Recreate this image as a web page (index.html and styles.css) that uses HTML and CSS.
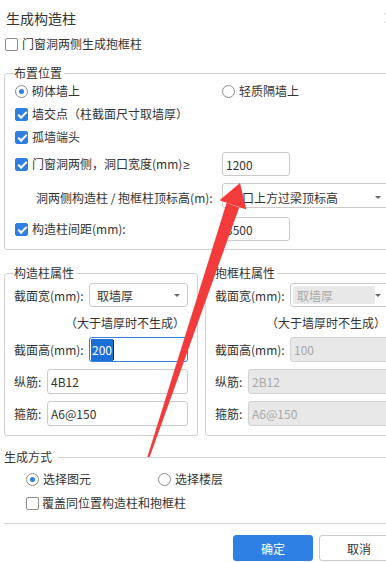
FILE: index.html
```html
<!DOCTYPE html>
<html lang="zh-CN">
<head>
    <meta charset="UTF-8">
    <meta name="viewport" content="width=device-width, initial-scale=1.0">
    <title>生成构造柱</title>
    <link rel="stylesheet" href="styles.css">
</head>
<body>
<div class="dialog">
    <div class="title">
        <span>生成构造柱</span>
        <svg class="close" width="10" height="10" viewBox="0 0 10 10"><path d="M0.5 0.5L9.5 9.5M9.5 0.5L0.5 9.5" stroke="#9a9a9a" stroke-width="1.2"/></svg>
    </div>

    <label class="check lone"><span class="box"></span>门窗洞两侧生成抱框柱</label>

    <fieldset class="group place">
        <legend>布置位置</legend>
        <div class="row">
            <label class="radio label-col"><span class="dot on"></span>砌体墙上</label>
            <label class="radio"><span class="dot"></span>轻质隔墙上</label>
        </div>
        <label class="check gap3"><span class="box on"></span>墙交点（柱截面尺寸取墙厚）</label>
        <label class="check gap3"><span class="box on"></span>孤墙端头</label>
        <div class="row field-row r1">
            <label class="check label-col"><span class="box on"></span><span>门窗洞两侧，洞口宽度(mm)<span class="ge">≥</span></span></label>
            <div class="input short">1200</div>
        </div>
        <div class="row field-row r2">
            <span class="label-col indent">洞两侧构造柱 / 抱框柱顶标高(m):</span>
            <div class="select grow"><span>洞口上方过梁顶标高</span><span class="caret"></span></div>
        </div>
        <div class="row field-row r3">
            <label class="check label-col"><span class="box on"></span>构造柱间距(mm):</label>
            <div class="input short">3500</div>
        </div>
    </fieldset>

    <div class="props">
        <fieldset class="group half">
            <legend>构造柱属性</legend>
            <div class="row prop-row first">
                <span class="lbl">截面宽(mm):</span>
                <div class="select grow"><span>取墙厚</span><span class="caret"></span></div>
            </div>
            <div class="note">（大于墙厚时不生成）</div>
            <div class="row prop-row">
                <span class="lbl">截面高(mm):</span>
                <div class="input grow focus"><span class="picked">200</span><span class="cursor"></span></div>
            </div>
            <div class="row prop-row">
                <span class="lbl short-lbl">纵筋:</span>
                <div class="input grow">4B12</div>
            </div>
            <div class="row prop-row">
                <span class="lbl short-lbl">箍筋:</span>
                <div class="input grow">A6@150</div>
            </div>
        </fieldset>

        <fieldset class="group half off">
            <legend>抱框柱属性</legend>
            <div class="row prop-row first">
                <span class="lbl">截面宽(mm):</span>
                <div class="select grow"><span class="inner">取墙厚</span><span class="caret"></span></div>
            </div>
            <div class="note">（大于墙厚时不生成）</div>
            <div class="row prop-row">
                <span class="lbl">截面高(mm):</span>
                <div class="input grow">100</div>
            </div>
            <div class="row prop-row">
                <span class="lbl short-lbl">纵筋:</span>
                <div class="input grow">2B12</div>
            </div>
            <div class="row prop-row">
                <span class="lbl short-lbl">箍筋:</span>
                <div class="input grow">A6@150</div>
            </div>
        </fieldset>
    </div>

    <div class="section">生成方式</div>
    <div class="row gen">
        <label class="radio gen-first"><span class="dot on"></span>选择图元</label>
        <label class="radio"><span class="dot"></span>选择楼层</label>
    </div>
    <label class="check cover"><span class="box"></span>覆盖同位置构造柱和抱框柱</label>

    <div class="divider"></div>

    <div class="buttons">
        <button class="btn primary">确定</button>
        <button class="btn">取消</button>
    </div>

    <!-- red annotation arrow drawn over the dialog -->
    <svg class="arrow" width="386" height="562" viewBox="0 0 386 562">
        <polygon points="147.4,448.8 149.6,449.2 239.2,199.4 226.6,194.8" fill="#f33b3b"/>
        <polygon points="240,175 219.5,192.3 246.3,201.6" fill="#f33b3b"/>
    </svg>
</div>
</body>
</html>
```

FILE: styles.css
```css
* {
    box-sizing: border-box;
}

body {
    margin: 0;
    background: #fff;
    overflow: hidden;
    font-family: "Noto Sans CJK SC", "Noto Sans", sans-serif;
    font-size: 12px;
    color: #333;
}

.dialog {
    position: relative;
    width: 403px;
    padding: 0 4px;
}

.title {
    display: flex;
    align-items: center;
    height: 20px;
    margin-top: 8px;
    padding-left: 2px;
    font-size: 14px;
    line-height: 20px;
}

.close {
    margin-left: auto;
    margin-right: 4px;
}

.row {
    display: flex;
    align-items: center;
}

.check,
.radio {
    display: flex;
    align-items: center;
    gap: 4px;
    height: 20px;
    line-height: 20px;
    white-space: nowrap;
}

.lone {
    margin-top: 6px;
    padding-left: 1px;
}

.gap3 {
    margin-top: 3px;
}

.ge {
    font-family: "Liberation Sans", sans-serif;
    margin-left: 1px;
}

/* checkbox and radio marks */
.box {
    flex: none;
    width: 13px;
    height: 13px;
    border: 1px solid #8c8c8c;
    border-radius: 2px;
    background: #fff;
}

.box.on {
    background: #2f7fe0;
    border-color: #2f7fe0;
}

.box.on::after {
    content: "";
    display: block;
    width: 7px;
    height: 3px;
    border-left: 2px solid #fff;
    border-bottom: 2px solid #fff;
    transform: translate(2px, 2.5px) rotate(-45deg);
}

.dot {
    flex: none;
    width: 13px;
    height: 13px;
    border: 1px solid #8c8c8c;
    border-radius: 50%;
    background: #fff;
    display: flex;
    align-items: center;
    justify-content: center;
}

.dot.on::after {
    content: "";
    width: 5px;
    height: 5px;
    border-radius: 50%;
    background: #2f7fe0;
}

/* group boxes */
.group {
    margin: 0;
    min-width: 0;
    border: 1px solid #d0d0d0;
    border-radius: 3px;
}

.group legend {
    padding: 0 2px 0 0;
    line-height: 16px;
}

.place {
    margin-top: 11px;
    padding: 0 9px 8px 10px;
}

.place legend {
    margin-left: -1px;
}

.label-col {
    flex: none;
    width: 207px;
}

.indent {
    padding-left: 21px;
    line-height: 20px;
    padding-top: 4px;
}

.field-row {
    height: 24px;
}

.r1 {
    margin-top: 5px;
}

.r2 {
    margin-top: 7px;
    height: 25px;
}

.r3 {
    margin-top: 9px;
}

.input,
.select {
    display: flex;
    align-items: center;
    height: 24px;
    border: 1px solid #cacaca;
    border-radius: 3px;
    background: #fff;
    padding: 0 3px;
    white-space: nowrap;
    overflow: hidden;
}

.short {
    width: 68px;
}

.grow {
    flex: 1;
    min-width: 0;
}

.select {
    padding: 0 7px;
}

.r2 .select {
    height: 25px;
    padding-top: 3px;
}

.caret {
    flex: none;
    margin-left: auto;
    width: 0;
    height: 0;
    border-left: 3px solid transparent;
    border-right: 3px solid transparent;
    border-top: 3px solid #666;
}

/* property columns */
.props {
    display: grid;
    grid-template-columns: 194px 194px;
    column-gap: 7px;
    margin-top: 15px;
}

.half {
    padding: 2px 9px 9px 9px;
}

.prop-row {
    height: 25px;
    margin-top: 7px;
}

.prop-row.first {
    height: 24px;
    margin-top: 0;
}

.prop-row .input {
    height: 25px;
}

.lbl {
    flex: none;
    width: 75px;
    white-space: nowrap;
}

.short-lbl {
    width: 33px;
}

.note {
    height: 16px;
    line-height: 16px;
    margin: 8px 3px -1px 0;
    text-align: right;
    white-space: nowrap;
}

.focus {
    border-color: #2f7fe0;
    padding: 0 1px;
}

.picked {
    background: #1a70d6;
    color: #fff;
    padding: 0 1px;
    line-height: 22px;
}

.cursor {
    width: 1px;
    height: 20px;
    background: #222;
}

.off .input {
    background: #e8e8e8;
    border-color: #d2d2d2;
    color: #a8a8a8;
}

.off .select {
    padding: 2px 7px 2px 2px;
}

.off .inner {
    display: flex;
    align-items: center;
    flex: none;
    width: 82px;
    height: 100%;
    padding-left: 4px;
    border-radius: 2px;
    background: #e8e8e8;
    color: #a8a8a8;
}

/* generation method */
.section {
    display: flex;
    align-items: center;
    height: 16px;
    line-height: 16px;
    margin-top: 13px;
}

.section::after {
    content: "";
    flex: 1;
    height: 1px;
    margin-left: 6px;
    background: #d3d3d3;
}

.gen {
    margin-top: 4px;
    padding-left: 22px;
}

.gen-first {
    width: 132px;
}

.cover {
    margin-top: 4px;
    padding-left: 22px;
    gap: 3px;
}

.divider {
    height: 1px;
    margin-top: 10px;
    background: #d5d5d5;
}

.buttons {
    display: flex;
    justify-content: flex-end;
    gap: 6px;
    margin-top: 11px;
}

.btn {
    width: 80px;
    height: 26px;
    border: 1px solid #c9c9c9;
    border-radius: 3px;
    background: #fff;
    color: #333;
    font-family: inherit;
    font-size: 12px;
    padding: 0;
}

.btn.primary {
    background: #2e80e4;
    border-color: #2e80e4;
    color: #fff;
}

.arrow {
    position: absolute;
    left: 0;
    top: 0;
    pointer-events: none;
}
```
